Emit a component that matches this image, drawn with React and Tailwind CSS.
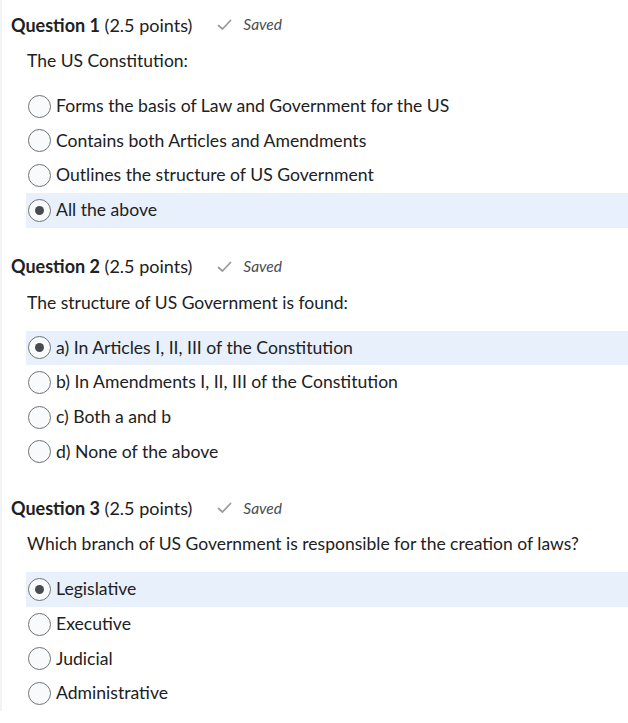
import { useState } from "react";

const questions = [
  {
    n: 1,
    prompt: "The US Constitution:",
    options: [
      "Forms the basis of Law and Government for the US",
      "Contains both Articles and Amendments",
      "Outlines the structure of US Government",
      "All the above",
    ],
    picked: 3,
  },
  {
    n: 2,
    prompt: "The structure of US Government is found:",
    options: [
      "a) In Articles I, II, III of the Constitution",
      "b) In Amendments I, II, III of the Constitution",
      "c) Both a and b",
      "d) None of the above",
    ],
    picked: 0,
  },
  {
    n: 3,
    prompt: "Which branch of US Government is responsible for the creation of laws?",
    options: ["Legislative", "Executive", "Judicial", "Administrative"],
    picked: 0,
  },
];

function Check() {
  return (
    <svg width="15" height="12" viewBox="0 0 15 12" fill="none">
      <path d="M1.5 6.5 L5.5 10 L13.5 1.5" stroke="#9a9c9e" strokeWidth="1.8" strokeLinecap="round" strokeLinejoin="round" />
    </svg>
  );
}

function Radio({ on }) {
  return (
    <span className="w-[23px] h-[23px] rounded-full border border-[#6e7376] bg-[#f9fafb] flex items-center justify-center shrink-0">
      {on && <span className="w-[9px] h-[9px] rounded-full bg-[#494c4e]" />}
    </span>
  );
}

function Question({ q, picked, onPick, last }) {
  return (
    <div className={`pt-[13px] ${last ? "" : "pb-[14px]"}`}>
      <div className="flex items-center h-6 pl-[9px]">
        <span className="text-[18px] text-[#202122]">
          <span className="font-bold">Question {q.n}</span> (2.5 points)
        </span>
        <span className="ml-[25px] flex items-center">
          <Check />
        </span>
        <span className="ml-[11px] text-[15.5px] italic text-[#494c4e]">Saved</span>
      </div>
      <p className="mt-3 h-6 flex items-center pl-[25px] text-[17.5px] text-[#202122]">{q.prompt}</p>
      <div className="mt-[16px] ml-[24px] flex flex-col">
        {q.options.map((o, i) => (
          <label
            key={i}
            onClick={() => onPick(i)}
            className={`h-[34.67px] flex items-center pl-[2px] gap-[5px] cursor-pointer text-[17.6px] text-[#202122] ${picked === i ? "bg-[#e8f0fb]" : ""}`}
          >
            <Radio on={picked === i} />
            <span>{o}</span>
          </label>
        ))}
      </div>
    </div>
  );
}

export default function App() {
  const [picks, setPicks] = useState(questions.map(q => q.picked));
  return (
    <div className="bg-white min-h-[723px] w-[628px]" style={{ fontFamily: "Lato, 'Open Sans', sans-serif" }}>
      <div className="border-l-2 border-[#f3f3f3]">
        {questions.map((q, qi) => (
          <Question
            key={q.n}
            q={q}
            picked={picks[qi]}
            last={qi === questions.length - 1}
            onPick={i => setPicks(p => p.map((v, j) => (j === qi ? i : v)))}
          />
        ))}
      </div>
    </div>
  );
}
